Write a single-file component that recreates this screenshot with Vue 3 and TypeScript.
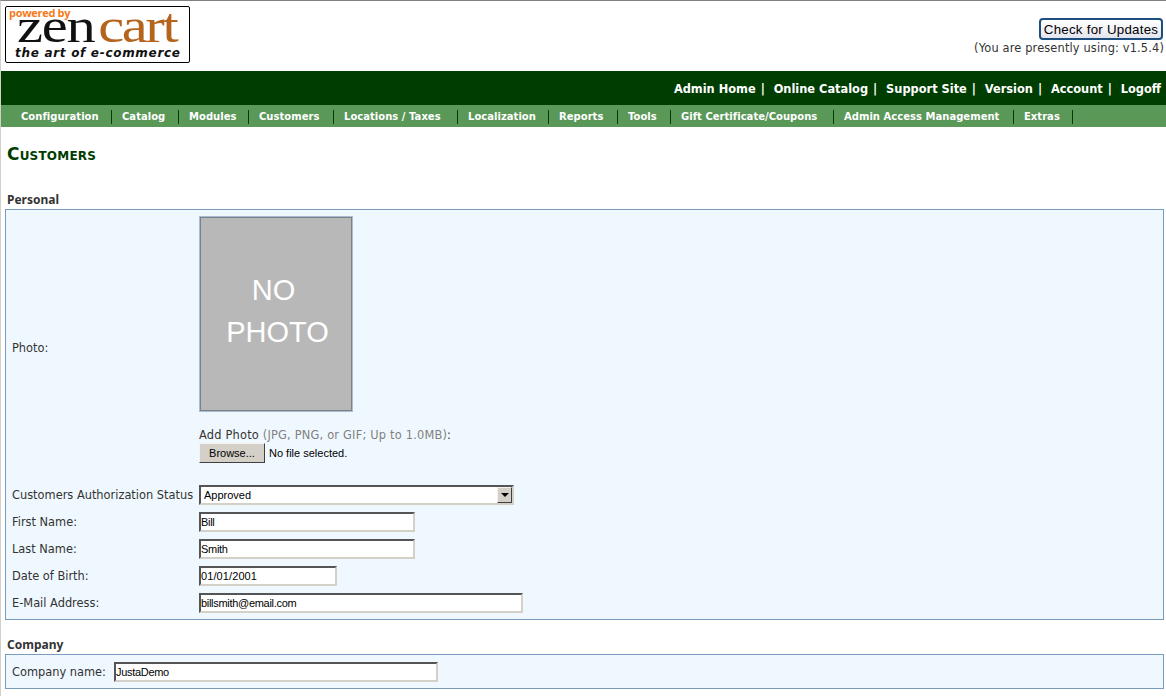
<script setup lang="ts">
const topLinks = ['Admin Home', 'Online Catalog', 'Support Site', 'Version', 'Account', 'Logoff']
const menu = [
  { label: 'Configuration', width: 101 },
  { label: 'Catalog', width: 67 },
  { label: 'Modules', width: 70 },
  { label: 'Customers', width: 85 },
  { label: 'Locations / Taxes', width: 124 },
  { label: 'Localization', width: 91 },
  { label: 'Reports', width: 69 },
  { label: 'Tools', width: 53 },
  { label: 'Gift Certificate/Coupons', width: 163 },
  { label: 'Admin Access Management', width: 180 },
  { label: 'Extras', width: 59 },
]
const fields = [
  { label: 'First Name:', value: 'Bill', size: 'name' },
  { label: 'Last Name:', value: 'Smith', size: 'name' },
  { label: 'Date of Birth:', value: '01/01/2001', size: 'date' },
  { label: 'E-Mail Address:', value: 'billsmith@email.com', size: 'email' },
]
</script>

<template>
  <div class="page">
    <header class="head">
      <div class="logo">
        <span class="powered">powered by</span>
        <div class="wordmark"><span class="zen">zen</span><span class="cart">cart</span></div>
        <div class="tagline">the art of e-commerce</div>
      </div>
      <div class="version">
        <button class="update" type="button">Check for Updates</button>
        <div class="using">(You are presently using: v1.5.4)</div>
      </div>
    </header>

    <nav class="top-nav">
      <a v-for="(link, i) in topLinks" :key="link" class="top-link">{{ link }}<span v-if="i < topLinks.length - 1" class="pipe">|</span></a>
    </nav>

    <nav class="menu">
      <a v-for="item in menu" :key="item.label" class="menu-item" :style="{ width: item.width + 'px' }">{{ item.label }}</a>
    </nav>

    <main class="content">
      <h1 class="title">Customers</h1>

      <h2 class="legend personal">Personal</h2>
      <section class="box personal-box">
        <div class="row photo-row">
          <label class="label">Photo:</label>
          <div class="photo-cell">
            <div class="photo"><span class="no">NO</span><span class="word">PHOTO</span></div>
            <div class="add-photo">Add Photo <span class="hint">(JPG, PNG, or GIF; Up to 1.0MB)</span>:</div>
            <div class="file"><button class="browse" type="button">Browse...</button><span class="no-file">No file selected.</span></div>
          </div>
        </div>
        <div class="row status-row">
          <label class="label">Customers Authorization Status</label>
          <div class="select">
            <span class="select-value">Approved</span>
            <span class="arrow"></span>
          </div>
        </div>
        <div v-for="f in fields" :key="f.label" class="row field-row">
          <label class="label">{{ f.label }}</label>
          <input class="input" :class="f.size" type="text" :value="f.value" />
        </div>
      </section>

      <h2 class="legend company">Company</h2>
      <section class="box company-box">
        <label class="label inline">Company name:</label>
        <input class="input company-input" type="text" value="JustaDemo" />
      </section>
    </main>
  </div>
</template>

<style scoped>
.page {
  height: 696px;
  box-sizing: border-box;
  overflow: hidden;
  background: #fff;
  border-top: 1px solid #808080;
  border-left: 1px solid #d4d0c8;
  font-family: "DejaVu Sans", Verdana, sans-serif;
  font-size: 11.4px;
  color: #333;
}

.head {
  height: 70px;
  display: flex;
  justify-content: space-between;
  padding: 5px 2px 0 4px;
  box-sizing: border-box;
}

.logo {
  position: relative;
  width: 185px;
  height: 57px;
  box-sizing: border-box;
  border: 1px solid #000;
  border-radius: 2px;
}

.powered {
  position: absolute;
  left: 3px;
  top: -1px;
  font: bold 11px/14px "Open Sans", sans-serif;
  letter-spacing: -0.3px;
  color: #f47b20;
  z-index: 1;
}

.wordmark {
  height: 38px;
  padding-left: 11px;
  font-family: "Liberation Serif", serif;
  font-size: 48px;
  line-height: 38px;
  color: #111;
  white-space: nowrap;
  transform: scaleX(1.22);
  transform-origin: 11px 0;
}

.zen {
  letter-spacing: -1px;
}

.cart {
  margin-left: 3px;
  letter-spacing: -2px;
  color: #b5641e;
}

.tagline {
  margin-top: 1px;
  padding-left: 9px;
  font: italic bold 12px "DejaVu Sans", sans-serif;
  letter-spacing: 0.7px;
  color: #111;
}

.version {
  padding-top: 12px;
  text-align: right;
}

.update {
  display: block;
  width: 124px;
  height: 22px;
  margin: 0 1px 0 auto;
  padding: 0;
  border: 2px solid #1c4f80;
  border-radius: 4px;
  background: linear-gradient(#fff, #e4e4ee);
  font: 13.3px "Liberation Sans", Arial, sans-serif;
  letter-spacing: 0.25px;
  color: #000;
}

.using {
  margin-top: 1px;
  line-height: 14px;
  letter-spacing: 0.15px;
}

.top-nav {
  height: 34px;
  box-sizing: border-box;
  padding: 2px 5px 0 0;
  display: flex;
  justify-content: flex-end;
  align-items: center;
  gap: 8.8px;
  background: #003d00;
  color: #fff;
  font-weight: bold;
  font-size: 11.4px;
}

.pipe {
  margin-left: 5px;
}

.menu {
  height: 22px;
  box-sizing: border-box;
  padding: 1px 0 0 10px;
  display: flex;
  align-items: center;
  background: #5a9858;
  color: #fff;
  font-weight: bold;
  font-size: 10px;
  letter-spacing: 0.03px;
}

.menu-item {
  height: 14px;
  box-sizing: border-box;
  line-height: 14px;
  padding-left: 10px;
  white-space: nowrap;
  border-right: 1px solid #003d00;
}

.content {
  padding: 0 2px 0 4px;
}

.title {
  margin: 0;
  padding: 17px 0 0 2px;
  font-size: 17px;
  line-height: 20px;
  letter-spacing: 0.2px;
  font-weight: bold;
  font-variant: small-caps;
  color: #003d00;
}

.legend {
  margin: 0;
  padding-left: 2px;
  font: bold 12px/14px "Noto Sans", sans-serif;
  color: #333;
}

.personal {
  margin-top: 29px;
}

.company {
  margin-top: 18px;
}

.box {
  margin-top: 2px;
  background: #f0f8ff;
  border: 1px solid #7a9cbc;
}

.personal-box {
  height: 411px;
  box-sizing: border-box;
  padding-top: 6px;
}

.row {
  display: grid;
  grid-template-columns: 187px 1fr;
  align-items: center;
  padding-left: 6px;
}

.label {
  line-height: 14px;
}

.photo-cell {
  display: flex;
  flex-direction: column;
  padding-bottom: 16px;
}

.photo {
  width: 154px;
  height: 196px;
  box-sizing: border-box;
  border: 1px solid #a9bcd0;
  box-shadow: inset 0 0 0 1px #7a8288;
  background: #b8b8b8;
  display: flex;
  flex-direction: column;
  align-items: center;
  justify-content: center;
  gap: 2px;
  padding-bottom: 6px;
  color: #fff;
  font: 29px/40px "Liberation Sans", Arial, sans-serif;
}

.no {
  margin-right: 5px;
}

.word {
  margin-left: 3px;
}

.add-photo {
  margin-top: 16px;
  line-height: 15px;
  letter-spacing: 0.2px;
}

.hint {
  color: #808080;
}

.file {
  display: flex;
  align-items: center;
}

.browse {
  width: 66px;
  height: 20px;
  padding: 0;
  border: 1px solid;
  border-color: #f4f2ee #404040 #404040 #f4f2ee;
  background: #d4d0c8;
  font: 11px "Liberation Sans", Arial, sans-serif;
  color: #000;
}

.no-file {
  margin-left: 4px;
  font: 11px "Liberation Sans", Arial, sans-serif;
  color: #000;
}

.status-row {
  margin-top: 6px;
}

.select {
  position: relative;
  width: 315px;
  height: 20px;
  box-sizing: border-box;
  border: 2px solid;
  border-color: #555 #d4d0c8 #d4d0c8 #555;
  background: #fff;
  font: 11px/16px "Liberation Sans", Arial, sans-serif;
  color: #000;
}

.select-value {
  padding-left: 3px;
}

.arrow {
  position: absolute;
  right: 0;
  top: 0;
  width: 15px;
  height: 16px;
  box-sizing: border-box;
  border: 1px solid;
  border-color: #f4f2ee #404040 #404040 #f4f2ee;
  background: #d4d0c8;
}

.arrow::after {
  content: "";
  position: absolute;
  left: 3px;
  top: 5px;
  border-left: 4px solid transparent;
  border-right: 4px solid transparent;
  border-top: 4px solid #000;
}

.field-row {
  margin-top: 7px;
}

.input {
  height: 20px;
  box-sizing: border-box;
  padding: 0;
  border: 2px solid;
  border-color: #555 #d4d0c8 #d4d0c8 #555;
  outline: none;
  background: #fff;
  font: 11px "Liberation Sans", Arial, sans-serif;
  letter-spacing: -0.3px;
  color: #000;
}

.name {
  width: 216px;
}

.date {
  width: 138px;
  letter-spacing: 0.1px;
}

.email {
  width: 324px;
}

.company-box {
  height: 35px;
  box-sizing: border-box;
  display: flex;
  align-items: center;
  padding-left: 6px;
}

.inline {
  margin-right: 8px;
}

.company-input {
  width: 324px;
}
</style>
